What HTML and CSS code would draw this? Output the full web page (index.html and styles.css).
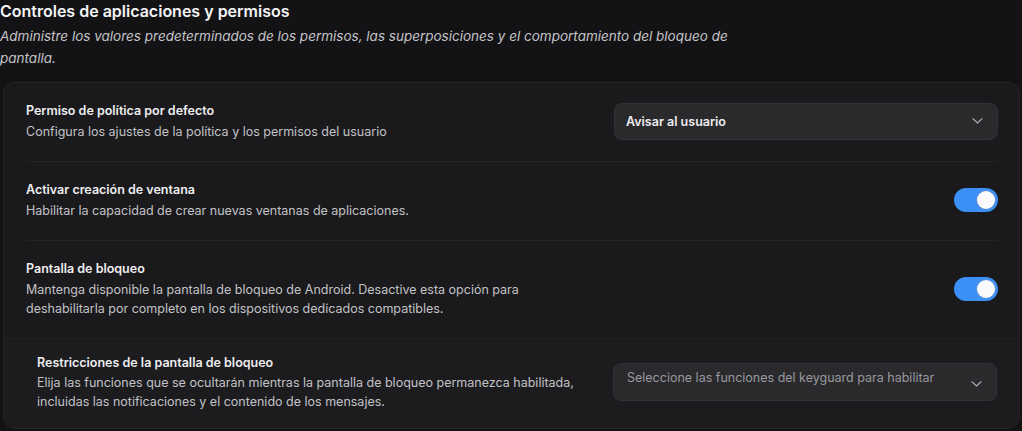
FILE: index.html
```html
<!DOCTYPE html>
<html lang="es">
<head>
<meta charset="utf-8">
<link rel="stylesheet" href="styles.css">
</head>
<body>
<div class="page">
  <header class="head">
    <h1 class="title">Controles de aplicaciones y permisos</h1>
    <p class="subtitle">Administre los valores predeterminados de los permisos, las superposiciones y el comportamiento del bloqueo de pantalla.</p>
  </header>
  <section class="card">
    <div class="row">
      <div class="text">
        <div class="row-title">Permiso de política por defecto</div>
        <div class="row-desc">Configura los ajustes de la política y los permisos del usuario</div>
      </div>
      <div class="select">
        <span class="select-value">Avisar al usuario</span>
        <svg class="chev" width="11" height="6" viewBox="0 0 11 6"><path d="M1 0.8 L5.5 5 L10 0.8" fill="none" stroke="#a8a8ac" stroke-width="1.2" stroke-linecap="round" stroke-linejoin="round"/></svg>
      </div>
    </div>
    <div class="row">
      <div class="text">
        <div class="row-title">Activar creación de ventana</div>
        <div class="row-desc">Habilitar la capacidad de crear nuevas ventanas de aplicaciones.</div>
      </div>
      <div class="toggle"><span class="knob"></span></div>
    </div>
    <div class="row row-last">
      <div class="text">
        <div class="row-title">Pantalla de bloqueo</div>
        <div class="row-desc">Mantenga disponible la pantalla de bloqueo de Android. Desactive esta opción para<br>deshabilitarla por completo en los dispositivos dedicados compatibles.</div>
      </div>
      <div class="toggle"><span class="knob"></span></div>
    </div>
    <div class="sub">
      <div class="text">
        <div class="row-title">Restricciones de la pantalla de bloqueo</div>
        <div class="row-desc sub-desc">Elija las funciones que se ocultarán mientras la pantalla de bloqueo permanezca habilitada,<br>incluidas las notificaciones y el contenido de los mensajes.</div>
      </div>
      <div class="select select-ph">
        <span class="select-placeholder">Seleccione las funciones del keyguard para habilitar</span>
        <svg class="chev chev-low" width="11" height="6" viewBox="0 0 11 6"><path d="M1 0.8 L5.5 5 L10 0.8" fill="none" stroke="#a8a8ac" stroke-width="1.2" stroke-linecap="round" stroke-linejoin="round"/></svg>
      </div>
    </div>
  </section>
</div>
</body>
</html>
```
FILE: styles.css
```css
html, body {
  margin: 0;
  padding: 0;
  background: #131315;
  height: 100%;
  overflow: hidden;
}
body {
  font-family: Inter, "Liberation Sans", sans-serif;
  color: #ececee;
}
.page {
  padding: 0 2px 0 3px;
}
.head {
  margin-left: -3px;
}
.title {
  margin: 0;
  padding-top: 1px;
  font-size: 16px;
  line-height: 20px;
  font-weight: 600;
  color: #f4f4f5;
}
.subtitle {
  margin: 4px 0 0;
  max-width: 735px;
  font-size: 13.5px;
  line-height: 22px;
  font-style: italic;
  color: #c4c4c8;
}
.card {
  margin-top: 13px;
  background: #1a1a1c;
  border: 1px solid #252528;
  border-radius: 12px;
  overflow: hidden;
}
.row {
  display: flex;
  align-items: center;
  justify-content: space-between;
  margin: 0 21px;
  padding: 18px 0 20px 1px;
  border-bottom: 1px solid #232326;
}
.row-last {
  border-bottom: none;
}
.text {
  flex: 1;
}
.row-title {
  font-size: 12.5px;
  line-height: 20px;
  font-weight: 600;
  color: #eeeef0;
}
.row-desc {
  margin-top: 1px;
  font-size: 12.5px;
  line-height: 19px;
  color: #c2c2c6;
}
.sub {
  display: flex;
  align-items: center;
  justify-content: space-between;
  background: #1c1c1f;
  border-top: 1px solid #202023;
  padding: 14px 22px 17px 33px;
}
.sub-desc {
  margin-top: 0;
}
.select {
  flex: none;
  display: flex;
  align-items: center;
  justify-content: space-between;
  padding: 0 14px 0 11px;
  background: #2a2a2d;
  border: 1px solid #333337;
  border-radius: 8px;
  box-sizing: border-box;
  width: 384px;
  height: 37px;
}
.select-value {
  font-size: 12.5px;
  font-weight: 600;
  color: #ededef;
}
.select-ph {
  height: 38px;
  align-items: flex-start;
  padding-top: 5px;
  padding-left: 13px;
}
.select-placeholder {
  font-size: 12.5px;
  line-height: 18px;
  color: #98989d;
}
.chev {
  display: block;
}
.chev-low {
  margin-top: 12px;
}
.toggle {
  flex: none;
  width: 44px;
  height: 24px;
  border-radius: 12px;
  background: #3c8ff4;
  display: flex;
  align-items: center;
  justify-content: flex-end;
  padding: 0 3px;
  box-sizing: border-box;
}
.knob {
  width: 18px;
  height: 18px;
  border-radius: 50%;
  background: #fbfbfd;
  box-shadow: 0 0 0 1px rgba(140,150,170,0.35);
}
```
